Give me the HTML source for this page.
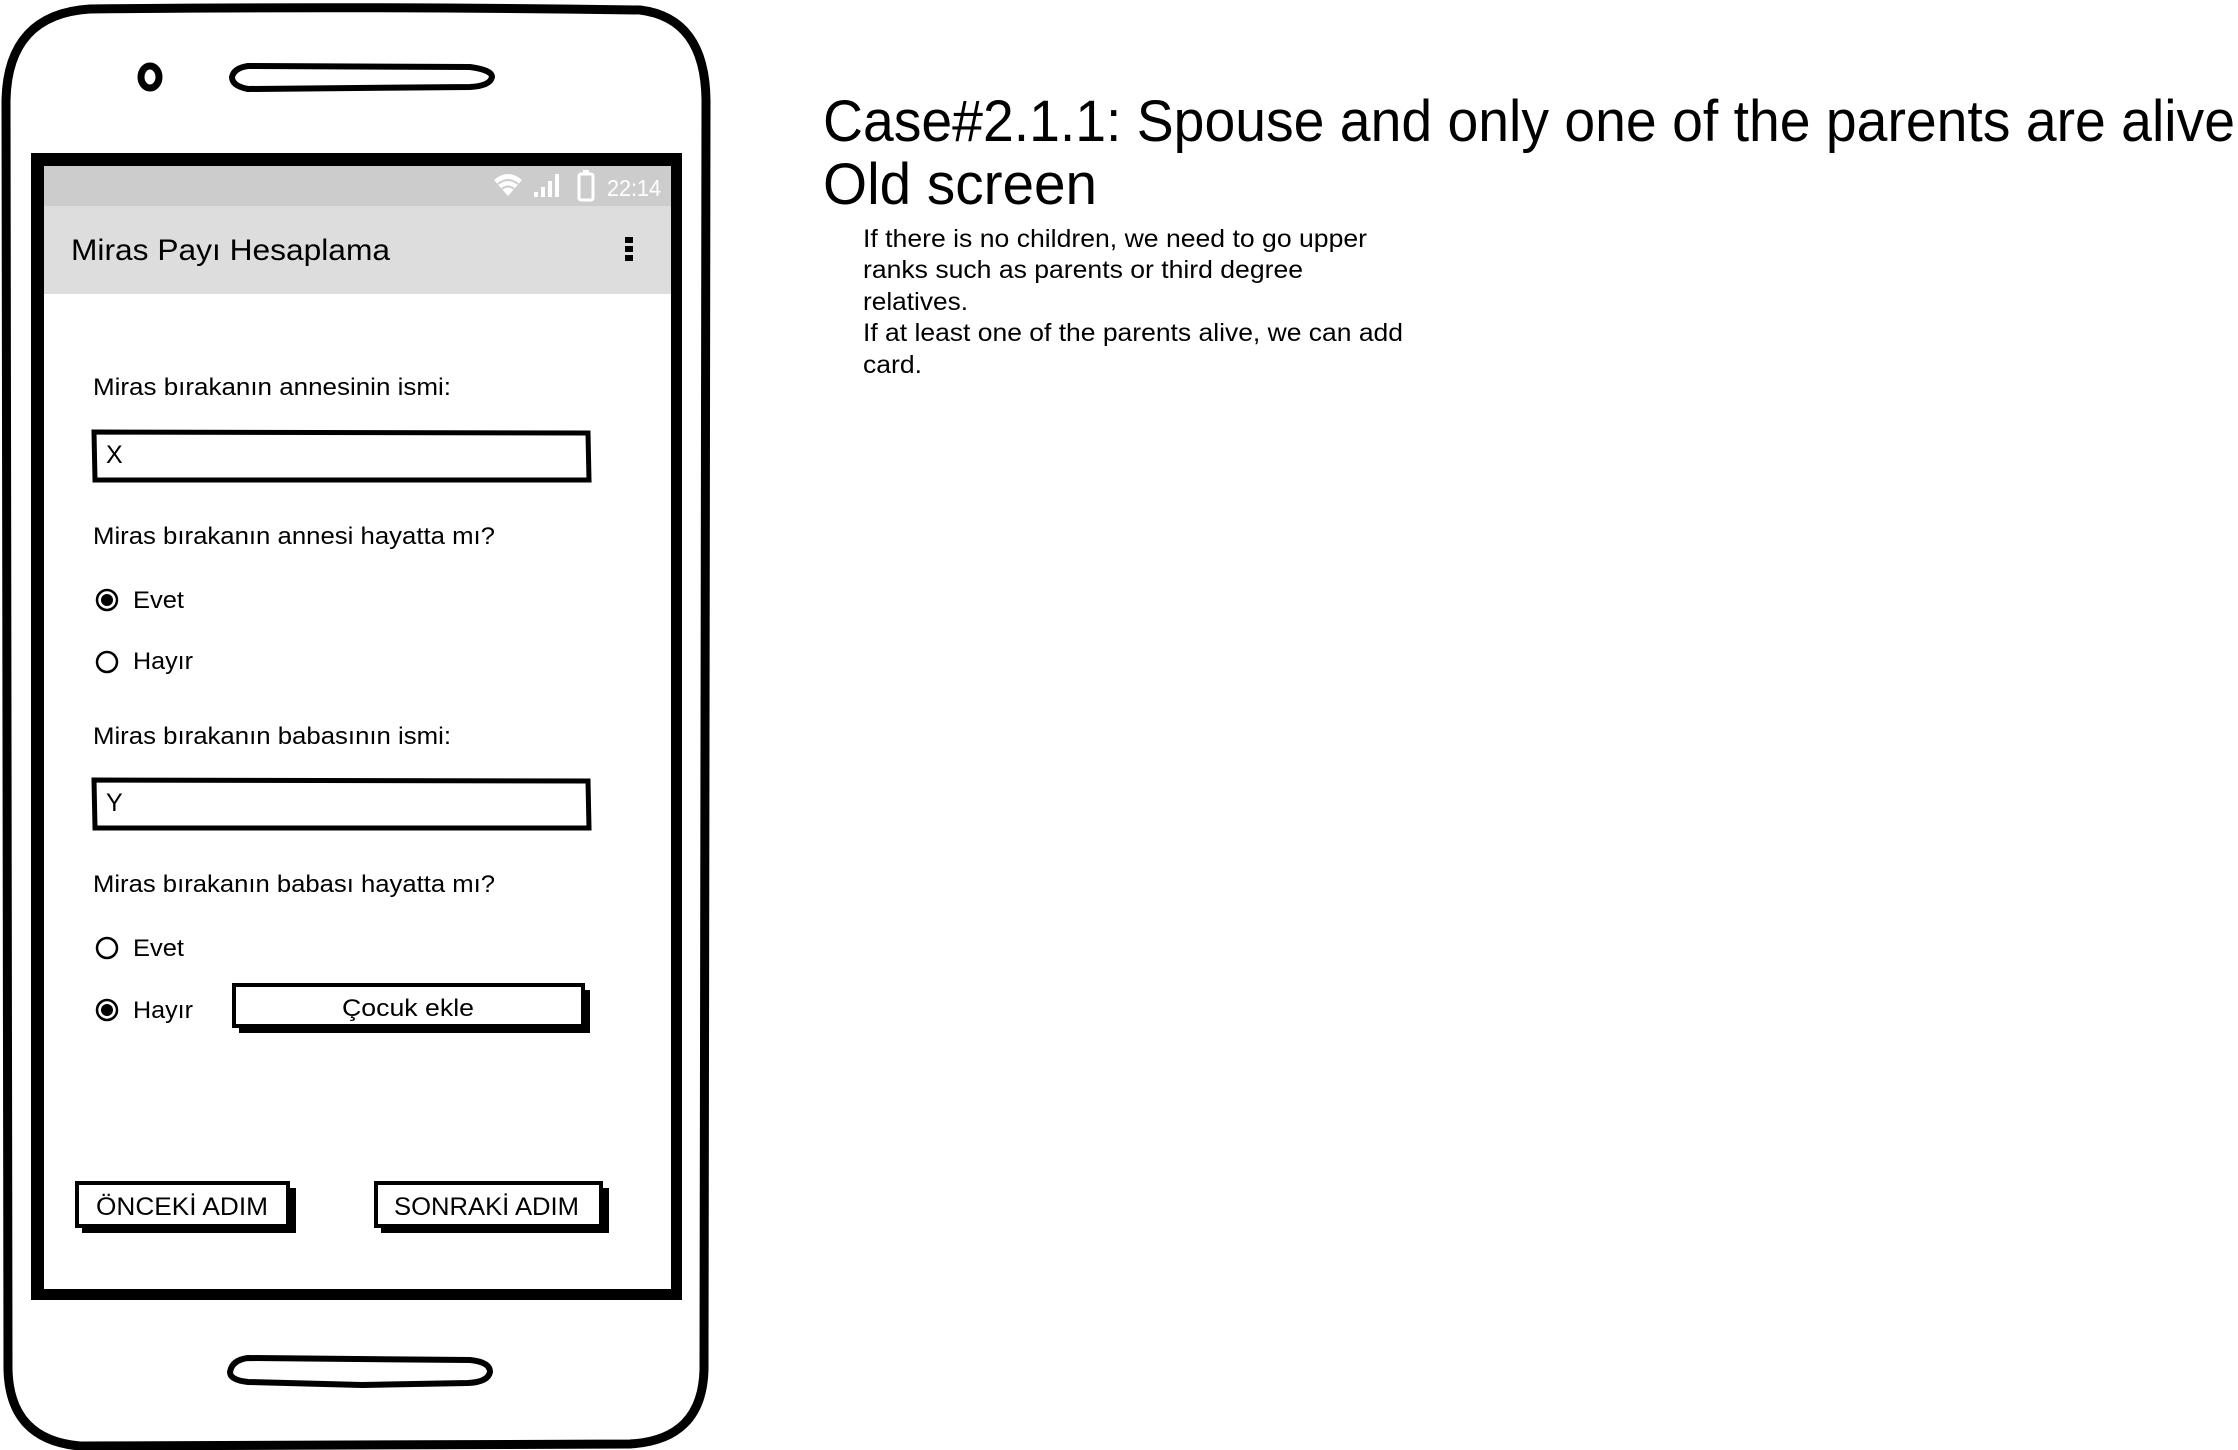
<!DOCTYPE html>
<html><head><meta charset="utf-8"><style>
html,body{margin:0;padding:0;background:#fff;}
svg{display:block;}
text{font-family:"Liberation Sans",sans-serif;fill:#000;}
</style></head><body>
<svg width="2238" height="1450" viewBox="0 0 2238 1450" xmlns="http://www.w3.org/2000/svg">
<path d="M90 9 Q360 6 640 10 Q705 18 706 100 L704 1370 Q702 1440 630 1444 L80 1446 Q10 1440 8 1370 L6 100 Q8 14 90 9 Z" fill="#fff" stroke="#000" stroke-width="9"/>
<ellipse cx="150" cy="77" rx="9" ry="11" fill="none" stroke="#000" stroke-width="7"/>
<path d="M248 66 L470 67 Q492 70 492 77 Q490 86 470 87 L248 89 Q232 86 232 77 Q234 68 248 66 Z" fill="none" stroke="#000" stroke-width="6"/>
<path d="M248 1358 L470 1360 Q490 1362 490 1372 Q488 1382 468 1383 L362 1385 L248 1382 Q230 1380 230 1372 Q232 1360 248 1358 Z" fill="none" stroke="#000" stroke-width="6"/>
<rect x="31" y="153" width="651" height="1147" fill="#000"/>
<rect x="44" y="166" width="627" height="1123" fill="#fff"/>
<rect x="44" y="166" width="627" height="40" fill="#cccccc"/>
<rect x="44" y="206" width="627" height="88" fill="#dddddd"/>
<path d="M494 180 Q508 168 522 180 L508 196 Z" fill="#fff"/>
<path d="M498 184 Q508 176 518 184" stroke="#ccc" stroke-width="2" fill="none"/>
<path d="M502 189 Q508 184 514 189" stroke="#ccc" stroke-width="2" fill="none"/>
<rect x="534" y="192" width="4" height="5" fill="#fff"/>
<rect x="541" y="187" width="4" height="10" fill="#fff"/>
<rect x="548" y="181" width="4" height="16" fill="#fff"/>
<rect x="555" y="174" width="4" height="23" fill="#fff"/>
<rect x="579" y="174" width="14" height="26" rx="2" fill="none" stroke="#fff" stroke-width="3"/>
<rect x="583" y="170" width="6" height="4" fill="#fff"/>
<text x="607" y="196" font-size="23" textLength="54" lengthAdjust="spacingAndGlyphs" style="fill:#fff">22:14</text>
<text x="71" y="260" font-size="30" textLength="319" lengthAdjust="spacingAndGlyphs">Miras Payı Hesaplama</text>
<rect x="625" y="237" width="8" height="6" fill="#000"/>
<rect x="625" y="246" width="8" height="6" fill="#000"/>
<rect x="625" y="255" width="8" height="6" fill="#000"/>
<text x="93" y="395" font-size="24" textLength="358" lengthAdjust="spacingAndGlyphs">Miras bırakanın annesinin ismi:</text>
<path d="M94 432 L588 433 L589 480 L95 480 Z" fill="#fff" stroke="#000" stroke-width="5"/>
<text x="106" y="463" font-size="25">X</text>
<text x="93" y="544" font-size="24" textLength="402" lengthAdjust="spacingAndGlyphs">Miras bırakanın annesi hayatta mı?</text>
<circle cx="107" cy="600" r="10" fill="none" stroke="#000" stroke-width="2.5"/>
<circle cx="107" cy="600" r="6" fill="#000"/>
<text x="133" y="608" font-size="24" textLength="51" lengthAdjust="spacingAndGlyphs">Evet</text>
<circle cx="107" cy="662" r="10" fill="none" stroke="#000" stroke-width="2.5"/>
<text x="133" y="669" font-size="24" textLength="60" lengthAdjust="spacingAndGlyphs">Hayır</text>
<text x="93" y="744" font-size="24" textLength="358" lengthAdjust="spacingAndGlyphs">Miras bırakanın babasının ismi:</text>
<path d="M94 780 L588 781 L589 828 L95 828 Z" fill="#fff" stroke="#000" stroke-width="5"/>
<text x="106" y="811" font-size="25">Y</text>
<text x="93" y="892" font-size="24" textLength="402" lengthAdjust="spacingAndGlyphs">Miras bırakanın babası hayatta mı?</text>
<circle cx="107" cy="948" r="10" fill="none" stroke="#000" stroke-width="2.5"/>
<text x="133" y="956" font-size="24" textLength="51" lengthAdjust="spacingAndGlyphs">Evet</text>
<circle cx="107" cy="1010" r="10" fill="none" stroke="#000" stroke-width="2.5"/>
<circle cx="107" cy="1010" r="6" fill="#000"/>
<text x="133" y="1018" font-size="24" textLength="60" lengthAdjust="spacingAndGlyphs">Hayır</text>
<rect x="239" y="990" width="351" height="43" fill="#000"/>
<rect x="234" y="985" width="349" height="41" fill="#fff" stroke="#000" stroke-width="4"/>
<text x="342" y="1016" font-size="24" textLength="132" lengthAdjust="spacingAndGlyphs">Çocuk ekle</text>
<rect x="82" y="1188" width="214" height="45" fill="#000"/>
<rect x="77" y="1183" width="211" height="43" fill="#fff" stroke="#000" stroke-width="4"/>
<text x="96" y="1215" font-size="25" textLength="172" lengthAdjust="spacingAndGlyphs">ÖNCEKİ ADIM</text>
<rect x="381" y="1188" width="228" height="45" fill="#000"/>
<rect x="376" y="1183" width="225" height="43" fill="#fff" stroke="#000" stroke-width="4"/>
<text x="394" y="1215" font-size="25" textLength="185" lengthAdjust="spacingAndGlyphs">SONRAKİ ADIM</text>
<text x="823" y="141" font-size="58" textLength="1412" lengthAdjust="spacingAndGlyphs">Case#2.1.1: Spouse and only one of the parents are alive</text>
<text x="823" y="204" font-size="58" textLength="274" lengthAdjust="spacingAndGlyphs">Old screen</text>
<text x="863" y="247" font-size="25" textLength="504" lengthAdjust="spacingAndGlyphs">If there is no children, we need to go upper</text>
<text x="863" y="278" font-size="25" textLength="440" lengthAdjust="spacingAndGlyphs">ranks such as parents or third degree</text>
<text x="863" y="310" font-size="25" textLength="105" lengthAdjust="spacingAndGlyphs">relatives.</text>
<text x="863" y="341" font-size="25" textLength="540" lengthAdjust="spacingAndGlyphs">If at least one of the parents alive, we can add</text>
<text x="863" y="373" font-size="25" textLength="59" lengthAdjust="spacingAndGlyphs">card.</text>
</svg>
</body></html>
